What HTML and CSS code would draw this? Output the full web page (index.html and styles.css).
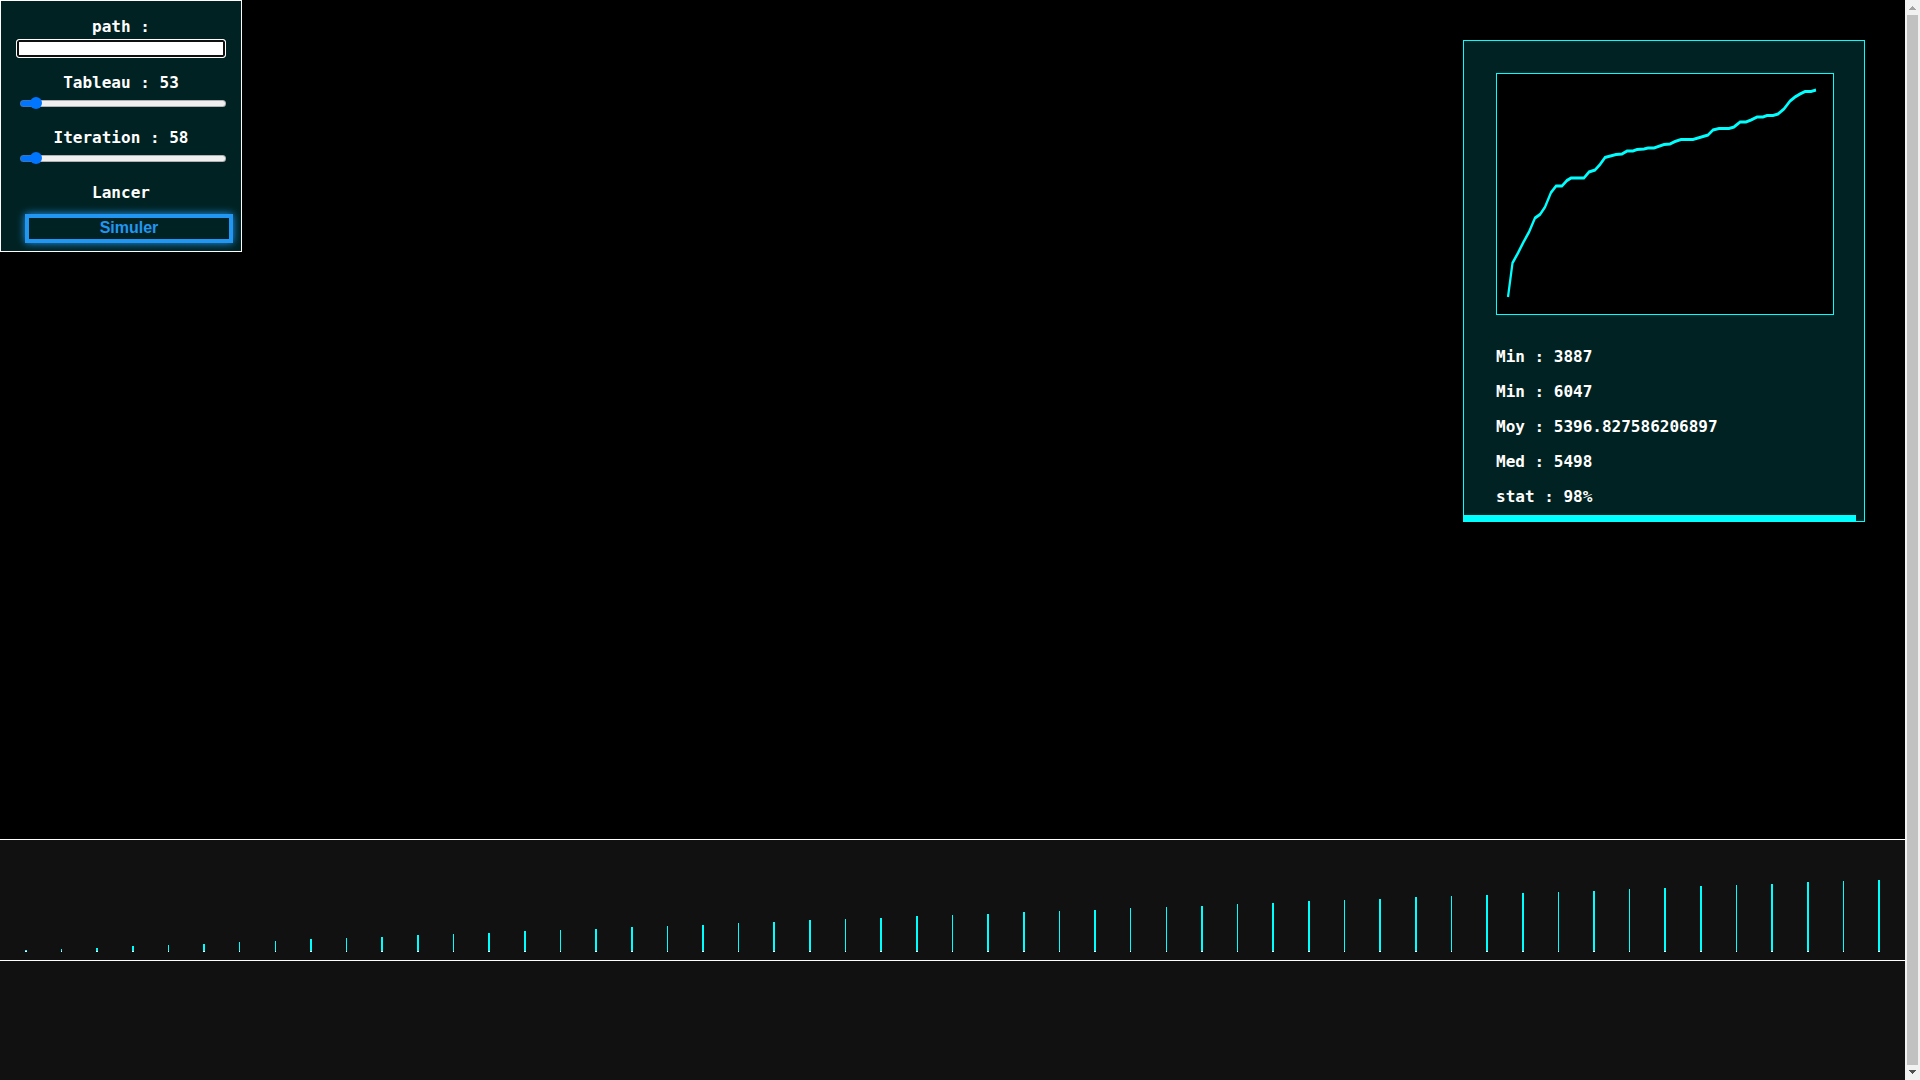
FILE: index.html
```html
<!DOCTYPE html>
<html lang="fr">
<head>
<meta charset="utf-8">
<title>Simulation</title>
<link rel="stylesheet" href="styles.css">
</head>
<body>
<div class="page">
  <main class="stage">
    <form class="controls">
      <label class="field" for="path">path :</label>
      <input class="path" id="path" type="text">
      <label class="field" for="tableau">Tableau : 53</label>
      <input class="slider" id="tableau" type="range" min="9" max="1000" value="53" style="--fill: 15px">
      <label class="field" for="iteration">Iteration : 58</label>
      <input class="slider" id="iteration" type="range" min="9" max="1000" value="58" style="--fill: 16px">
      <label class="field" for="lancer">Lancer</label>
      <button class="launch" id="lancer" type="button">Simuler</button>
    </form>
    <section class="stats">
      <div class="stats-body">
        <svg class="chart" viewBox="0 0 300 150" preserveAspectRatio="none" aria-label="Distribution">
          <polyline id="curve"/>
        </svg>
        <p>Min : 3887</p>
        <p>Min : 6047</p>
        <p>Moy : 5396.827586206897</p>
        <p>Med : 5498</p>
        <p>stat : 98%</p>
      </div>
      <div class="progress"><div class="progress-value" style="width: 98%"></div></div>
    </section>
  </main>
  <section class="bars"><svg id="bars" width="100%" height="120" shape-rendering="crispEdges"></svg></section>
  <footer class="footer"></footer>
  <div class="scrollbar">
    <svg width="15" height="15"><path d="M7 6h1v1h1v1h1v1h1v1H4V9h1V8h1V7h1z" fill="#a3a3a3"/></svg>
    <div class="thumb"></div>
    <svg width="15" height="15"><path d="M4 5h7v1h-1v1H9v1H8v1H7V8H6V7H5V6H4z" fill="#505050"/></svg>
  </div>
</div>
<script src="script.js"></script>
</body>
</html>
```
FILE: styles.css
```css
* { box-sizing: border-box; }
body {
  margin: 0;
  background: #000;
  color: #fff;
  font: bold 16px/19px "DejaVu Sans Mono", monospace;
}
.page {
  display: grid;
  grid-template-columns: 1fr 15px;
  grid-template-rows: 1fr 122px 119px;
  min-height: 100vh;
}
.stage {
  display: flex;
  justify-content: space-between;
  align-items: flex-start;
}
.controls {
  display: flex;
  flex-direction: column;
  width: 242px;
  padding: 16px 15px 8px;
  border: 1px solid #fff;
  background: #022;
}
.field { text-align: center; }
.path {
  width: 100%;
  height: 19px;
  margin: 3px 0 15px;
  padding: 0;
  border: 1px solid #fff;
  border-radius: 3px;
  background: #fff;
  box-shadow: inset 0 0 0 2px #101010;
  outline: none;
}
.slider {
  appearance: none;
  height: 12px;
  margin: 5px 0 19px 4px;
  background: none;
}
.slider::-webkit-slider-runnable-track {
  height: 7px;
  border: 1px solid rgba(118, 118, 118, 0.5);
  border-radius: 4px;
  background: linear-gradient(to right, #0075ff var(--fill), #efefef var(--fill)) border-box;
}
.slider::-webkit-slider-thumb {
  appearance: none;
  width: 12px;
  height: 12px;
  margin-top: -4px;
  border-radius: 50%;
  background: #0075ff;
}
.launch {
  height: 29px;
  margin: 12px -7px 0 9px;
  padding: 0 0 2px;
  border: 4px solid #2196f3;
  background: #022;
  box-shadow: 0 0 8px #2196f3;
  color: #2196f3;
  font: bold 16px/19px "Liberation Sans", Arial, sans-serif;
}
.stats {
  width: 402px;
  margin: 40px 40px 0 0;
  border: 1px solid #0ff;
  background: #022;
}
.stats-body { padding: 32px 30px 9px 32px; }
.chart {
  display: block;
  width: 338px;
  height: 242px;
  margin-bottom: 32px;
  border: 1px solid #0ff;
  background: #000;
}
.chart polyline { fill: none; stroke: #0ff; stroke-width: 2; }
.stats p { margin: 0 0 16px; }
.stats p:last-child { margin: 0; }
.progress-value { height: 6px; background: #0ff; }
.bars {
  border: solid #fff;
  border-width: 1px 0;
  background: #111;
}
.bars svg { display: block; }
.footer { background: #111; }
.scrollbar {
  grid-column: 2;
  grid-row: 1 / 4;
  display: flex;
  flex-direction: column;
  background: #f1f1f1;
}
.thumb {
  flex: 1;
  margin: 0 2px;
  background: #c1c1c1;
}
```
FILE: script.js
```js
// Sorted simulation results, plotted in a 336 x 240 frame
const points = [[11,223],[15.5,189],[21,179],[26,169],[32,158],[38,144],[43,140.5],[48,133],[54,118.5],[59,112],[65,112],[70,106.5],[74,104],[87,104],[92,98],[98,96],[103,90.5],[108,83.5],[119,80.5],[125,80],[130,77],[136,77],[140,75.5],[147,75],[151,74],[157,74],[167,70.5],[173,70],[178,67.5],[184,65.5],[196,65.5],[211,61],[216,56],[222,54.5],[232,54.5],[237,53],[243,48],[249,48],[254,46],[260,43],[266,43],[270,41.5],[276,41.5],[281,40],[287,35],[293,27],[298,23],[303,20],[308,17.5],[314,17.5],[319,16]];
document.getElementById("curve").setAttribute("points",
  points.map(([x, y]) => `${x * 300 / 336},${y * 150 / 240}`).join(" "));

// One bar per entry of the table, spread over the full width
const bars = document.getElementById("bars");
const count = 53;
const rect = (x, y, w, h, fill) => {
  const r = document.createElementNS("http://www.w3.org/2000/svg", "rect");
  Object.entries({ x, y, width: w, height: h, fill }).forEach(([k, v]) => r.setAttribute(k, v));
  bars.append(r);
};
const draw = () => {
  bars.replaceChildren();
  const step = (bars.clientWidth - 51.7) / (count - 1);
  for (let i = 0; i < count; i++) {
    const left = 25.02 + i * step;
    const x = Math.round(left);
    const w = Math.round(left + 1.6) - x;
    const h = Math.floor((i + 1) * 72 / count - 0.2);
    rect(x, 111 - h, w, h, "#0ff");
    rect(x, 111, w, 1, "#fff");
  }
};
draw();
addEventListener("resize", draw);
```
